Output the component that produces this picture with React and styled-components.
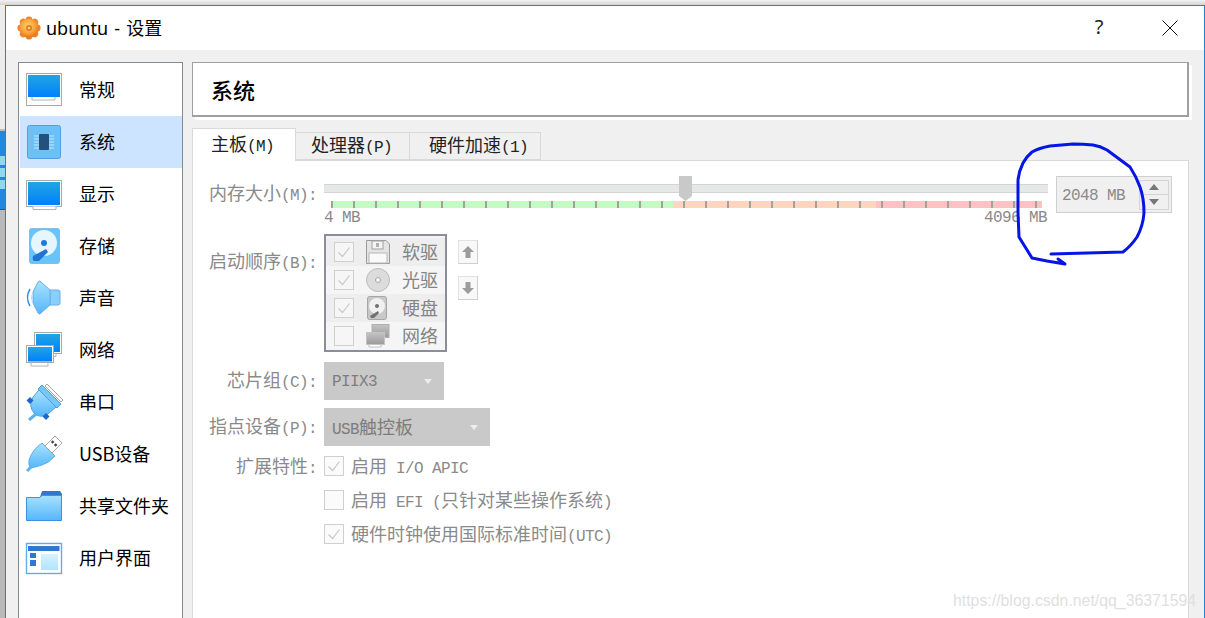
import styled, { createGlobalStyle } from 'styled-components'

const cjk = '"Noto Sans CJK SC", sans-serif'
const mono = '"Liberation Mono", "Noto Sans CJK SC", monospace'

const GlobalStyle = createGlobalStyle`
  html, body {
    margin: 0;
    padding: 0;
    background: #e6e6e6;
    font-family: ${cjk};
  }
`

const Page = styled.div`
  position: relative;
  display: flex;
  flex-direction: column;
  width: 1205px;
  height: 618px;
  overflow: hidden;
`

const TopStrip = styled.div`
  height: 5px;
  flex: none;
  background: linear-gradient(#f2f2f2, #d4d4d4);
`

const Desk = styled.div`
  display: flex;
  flex: 1;
  min-height: 0;
`

const Backdrop = styled.div`
  display: flex;
  flex-direction: column;
  width: 5px;
  flex: none;
  background: #b9b9b9;
`

const BackdropLight = styled.div`
  height: 124px;
  background: #ececec;
  border-bottom: 2px solid #bcbcbc;
`

const BackdropTask = styled.div`
  display: flex;
  flex-direction: column;
  gap: 3px;
  height: 79px;
  padding-top: 25px;
  box-sizing: border-box;
  background: #2088e0;
  border-bottom: 1px solid #0d5fa8;
`

const TaskChip = styled.div`
  height: 9px;
  background: #90d8ea;
`

const Window = styled.div`
  display: flex;
  flex-direction: column;
  flex: 1;
  min-width: 0;
  background: #f0f0f0;
  border: 1px solid #1f83d4;
  border-bottom: 0;
`

const TitleBar = styled.div`
  display: flex;
  align-items: center;
  height: 44px;
  flex: none;
  padding-left: 11px;
  background: #fff;
`

const TitleText = styled.span`
  margin-left: 5px;
  font: 18px/24px "Noto Sans", ${cjk};
  word-spacing: 1.5px;
  color: #000;
`

const TitleButtons = styled.div`
  display: flex;
  align-items: center;
  margin-left: auto;
`

const HelpMark = styled.span`
  width: 14px;
  margin: -3px 56px 0 0;
  text-align: center;
  font: 20px/24px "Noto Sans", sans-serif;
  color: #222;
`

const CloseMark = styled.svg`
  width: 16px;
  height: 16px;
  margin-right: 26px;
`

const Body = styled.div`
  display: flex;
  flex: 1;
  min-height: 0;
  gap: 9px;
  padding: 12px 15px 0 12px;
`

const Sidebar = styled.ul`
  width: 162px;
  flex: none;
  margin: 0;
  padding: 1px 0 0 1px;
  list-style: none;
  background: #fff;
  border: 1px solid #828a96;
  border-bottom: 0;
`

const NavItem = styled.li`
  display: flex;
  align-items: center;
  gap: 17px;
  height: 52px;
  padding-left: 6px;
  font-size: 18px;
  line-height: 24px;
  color: #000;
  background: ${(p) => (p.$active ? '#cce4ff' : 'transparent')};
`

const NavText = styled.span`
  margin-top: -2px;
`

const NavIcon = styled.svg`
  width: 36px;
  height: 36px;
  flex: none;
  overflow: visible;
`

const Content = styled.div`
  display: flex;
  flex-direction: column;
  flex: 1;
  min-width: 0;
`

const Header = styled.div`
  display: flex;
  align-items: center;
  height: 55px;
  flex: none;
  box-sizing: border-box;
  padding-left: 18px;
  font-size: 22px;
  font-weight: 500;
  color: #000;
  background: #fff;
  border: 1px solid #a0a0a0;
  border-width: 1px 2px 2px 1px;
  box-shadow: 3px 3px 0 #fff;
`

const TabRow = styled.div`
  display: flex;
  align-items: flex-end;
  height: 32px;
  flex: none;
  margin-top: 11px;
`

const Tab = styled.div`
  position: relative;
  z-index: ${(p) => (p.$active ? 1 : 0)};
  box-sizing: border-box;
  height: ${(p) => (p.$active ? '33px' : '28px')};
  margin-bottom: ${(p) => (p.$active ? '-1px' : '0')};
  margin-left: ${(p) => (p.$active ? '0' : '-1px')};
  padding: ${(p) => (p.$active ? '3px' : '0')} ${(p) => p.$right}px 0 ${(p) => p.$left}px;
  line-height: 22px;
  color: #222;
  background: ${(p) => (p.$active ? '#fff' : '#f0f0f0')};
  border: 1px solid #d9d9d9;
  border-bottom: ${(p) => (p.$active ? '0' : '1px solid #d9d9d9')};
`

const CjkText = styled.span`
  font-family: ${cjk};
  font-size: 18px;
`

const Latin = styled.span`
  font-family: ${mono};
  font-size: 16px;
  letter-spacing: -0.6px;
  white-space: pre;
`

const ValueText = styled(Latin)`
  margin-top: 2px;
`

const Panel = styled.div`
  flex: 1;
  min-height: 0;
  padding-top: 15px;
  background: #fff;
  border: 1px solid #d9d9d9;
  border-bottom: 0;
  color: #8a8a8a;
`

const Row = styled.div`
  display: grid;
  grid-template-columns: 124px 1fr;
  column-gap: 7px;
  margin-top: ${(p) => p.$top || 0}px;
`

const Label = styled.div`
  margin-top: ${(p) => p.$top || 0}px;
  text-align: right;
  line-height: 20px;
  white-space: nowrap;
  color: #8a8a8a;
`

const Control = styled.div`
  display: flex;
  align-items: flex-start;
`

const SliderBlock = styled.div`
  position: relative;
  width: 724px;
  height: 50px;
  flex: none;
  padding-top: 8px;
  box-sizing: border-box;
`

const Groove = styled.div`
  height: 9px;
  box-sizing: border-box;
  background: #e6e8e8;
  border-top: 1px solid #d4d4d4;
  border-bottom: 1px solid #d4d4d4;
`

const Handle = styled.div`
  position: absolute;
  left: 355px;
  top: 0;
  width: 13px;
  height: 25px;
  background: #c9c9c9;
  clip-path: polygon(0 0, 100% 0, 100% 80%, 50% 100%, 0 80%);
`

const Scale = styled.div`
  width: 711px;
  height: 7px;
  margin: 8px 0 0 7px;
  background:
    repeating-linear-gradient(90deg, #a3a295 0 2px, transparent 2px 22px),
    linear-gradient(
      90deg,
      #c4fbc4 0 342px,
      #ffd5c0 342px 545px,
      #ffc1c1 545px
    );
`

const ScaleLabels = styled.div`
  display: flex;
  justify-content: space-between;
  height: 16px;
  margin-top: 2px;
  padding-right: 1px;
  align-items: center;
  color: #8a8a8a;
`

const Spin = styled.div`
  display: flex;
  align-items: center;
  justify-content: space-between;
  width: 116px;
  height: 37px;
  flex: none;
  box-sizing: border-box;
  margin: 0 0 0 8px;
  padding: 0 2px 0 5px;
  background: #f0f0f0;
  border: 1px solid #cfcfcf;
  color: #8a8a8a;
`

const SpinButtons = styled.div`
  display: flex;
  flex-direction: column;
  width: 30px;
  height: 30px;
  box-sizing: border-box;
  border: 1px solid #d4d4d4;
`

const SpinStep = styled.div`
  display: flex;
  flex: 1;
  align-items: center;
  justify-content: center;
  & + & {
    border-top: 1px solid #d4d4d4;
  }
`

const StepArrow = styled.svg`
  width: 10px;
  height: 6px;
`

const BootList = styled.div`
  width: 123px;
  height: 118px;
  box-sizing: border-box;
  padding-top: 2px;
  background: #f3f3f3;
  border: 2px solid #8b8e99;
`

const BootRow = styled.div`
  display: flex;
  align-items: center;
  height: 28px;
  padding-left: 8px;
  background: ${(p) => (p.$odd ? '#eeeeee' : '#f5f5f5')};
  color: #848484;
`

const RaisedText = styled.span`
  margin-top: -2px;
`

const Check = styled.span`
  display: inline-flex;
  align-items: center;
  justify-content: center;
  width: 20px;
  height: 20px;
  flex: none;
  box-sizing: border-box;
  background: ${(p) => (p.$list ? '#f6f6f6' : '#fbfbfb')};
  border: 1px solid #cfcfcf;
`

const CheckMark = styled.svg`
  width: 14px;
  height: 12px;
`

const BootIcon = styled.svg`
  width: 24px;
  height: 24px;
  flex: none;
  margin: 0 12px;
`

const MoveButtons = styled.div`
  display: flex;
  flex-direction: column;
  gap: 12px;
  margin: 6px 0 0 11px;
`

const MoveButton = styled.div`
  display: flex;
  align-items: center;
  justify-content: center;
  width: 20px;
  height: 24px;
  box-sizing: border-box;
  background: #f8f8f8;
  border: 1px solid #e2e2e2;
  border-right-color: #cfcfcf;
  border-bottom-color: #cfcfcf;
`

const MoveArrow = styled.svg`
  width: 12px;
  height: 12px;
`

const Select = styled.div`
  display: flex;
  align-items: center;
  justify-content: space-between;
  width: ${(p) => p.$width}px;
  height: 38px;
  box-sizing: border-box;
  padding: 0 12px 0 8px;
  background: #c9c9c9;
  color: #7d7d7d;
`

const SelectArrow = styled.svg`
  width: 8px;
  height: 5px;
`

const OptionRow = styled.div`
  display: flex;
  align-items: center;
  gap: 7px;
  height: 20px;
  margin-top: ${(p) => p.$top || 0}px;
  color: #8a8a8a;
  white-space: nowrap;
`

const Stack = styled.div`
  display: flex;
  flex-direction: column;
`

const Scribble = styled.svg`
  position: absolute;
  left: 1010px;
  top: 138px;
  width: 145px;
  height: 135px;
`

const Watermark = styled.div`
  position: absolute;
  left: 953px;
  top: 591px;
  font: 15.85px/20px "Liberation Sans", sans-serif;
  color: #dfdfdf;
  white-space: nowrap;
`

const HiddenDefs = styled.svg`
  position: absolute;
  width: 0;
  height: 0;
`

// shared gradients for the coloured page icons
const Gradients = () => (
  <HiddenDefs aria-hidden="true">
    <defs>
      <linearGradient id="screen" x1="0" y1="0" x2="0" y2="1">
        <stop offset="0" stopColor="#22a5e4" />
        <stop offset="1" stopColor="#0080fb" />
      </linearGradient>
      <linearGradient id="sky" x1="0" y1="0" x2="0" y2="1">
        <stop offset="0" stopColor="#a8e2ff" />
        <stop offset="1" stopColor="#55b6fa" />
      </linearGradient>
      <linearGradient id="pale" x1="0" y1="0" x2="0" y2="1">
        <stop offset="0" stopColor="#d6f2ff" />
        <stop offset="1" stopColor="#b0e5ff" />
      </linearGradient>
      <radialGradient id="gear" cx="0.45" cy="0.4" r="0.6">
        <stop offset="0" stopColor="#ffd078" />
        <stop offset="0.6" stopColor="#fba53c" />
        <stop offset="1" stopColor="#e8701c" />
      </radialGradient>
      <linearGradient id="grey" x1="0" y1="0" x2="0" y2="1">
        <stop offset="0" stopColor="#c4c4c4" />
        <stop offset="1" stopColor="#9a9a9a" />
      </linearGradient>
    </defs>
  </HiddenDefs>
)

const GearIcon = () => {
  const teeth = [0, 45, 90, 135, 180, 225, 270, 315]
  return (
    <svg width="24" height="24" viewBox="0 0 24 24">
      {teeth.map((a) => (
        <circle key={a} cx="12" cy="3.8" r="3.4" fill="#ee8424" transform={`rotate(${a} 12 12)`} />
      ))}
      <circle cx="12" cy="12" r="9.6" fill="url(#gear)" />
      <circle cx="12" cy="12" r="3" fill="#e07a20" />
      <circle cx="12" cy="12" r="1.3" fill="#ffcf7a" />
    </svg>
  )
}

const GeneralIcon = () => (
  <NavIcon viewBox="0 0 36 36">
    <rect x="0.5" y="1.5" width="35" height="32" fill="#fff" stroke="#a8a8a8" />
    <rect x="2" y="3" width="32" height="22" fill="url(#screen)" />
    <path d="M6 25v3h23v-3" fill="#fff" stroke="#b4b4b4" />
  </NavIcon>
)

const SystemIcon = () => (
  <NavIcon viewBox="0 0 36 36">
    <rect x="1.5" y="1.5" width="33" height="33" rx="2" fill="#6cc0f6" stroke="#4f9fe2" />
    <path d="M8 12h20M8 15h20M8 18h20M8 21h20M8 24h20" stroke="#a5dcfb" strokeWidth="1.5" />
    <rect x="13" y="10" width="10" height="16" rx="1" fill="#24507e" />
  </NavIcon>
)

const DisplayIcon = () => (
  <NavIcon viewBox="0 0 36 36">
    <rect x="0.5" y="4.5" width="35" height="26" fill="#fff" stroke="#a8a8a8" />
    <rect x="2" y="6" width="32" height="23" fill="url(#screen)" />
    <path d="M7 30.500v3h23v-3" fill="#fff" stroke="#b4b4b4" />
  </NavIcon>
)

const StorageIcon = () => (
  <NavIcon viewBox="0 0 36 36">
    <rect x="3.5" y="0.5" width="30" height="35" rx="2" fill="#66c4fb" stroke="#8cb8e2" />
    <circle cx="18" cy="15" r="13" fill="#e6f6ff" />
    <circle cx="18" cy="15" r="3" fill="#1f7ada" />
    <path d="M7 28l13-7 2 3-9 9H8.500Q6 33 7 28z" fill="#2273d6" />
  </NavIcon>
)

const AudioIcon = () => (
  <NavIcon viewBox="0 0 36 36">
    <path d="M24 10H32Q34 10 34 12V23Q34 25 32 25H24Z" fill="#88d0fc" stroke="#6aaeea" />
    <path
      d="M7 12L12 2Q13.500 0 15 2L24 10V25L15 33Q13.500 35 12 33L7 23Z"
      fill="url(#sky)"
      stroke="#6aaeea"
    />
    <path d="M4 9Q-1 17.500 4 26" fill="none" stroke="#3c8ee2" strokeWidth="1.500" />
    <path d="M6.500 14Q5 17.500 6.500 21" fill="none" stroke="#b9dffa" strokeWidth="1.500" />
  </NavIcon>
)

const NetworkIcon = () => (
  <NavIcon viewBox="0 0 36 36">
    <path d="M30 21.500v3H23v-3" fill="#fff" stroke="#b4b4b4" />
    <rect x="8.500" y="0.500" width="27" height="21" fill="#fff" stroke="#a8a8a8" />
    <rect x="10" y="2" width="24" height="18" fill="url(#screen)" />
    <path d="M5 30.500v3.500H22v-3.500" fill="#fff" stroke="#b4b4b4" />
    <rect x="0.500" y="13.500" width="27" height="17" fill="#fff" stroke="#a8a8a8" />
    <rect x="2" y="15" width="24" height="14.500" fill="url(#screen)" />
  </NavIcon>
)

const SerialIcon = () => (
  <NavIcon viewBox="0 0 36 36">
    <path d="M19 2L21 0 37 16 35 18Z" fill="#fff" stroke="#a8a8a8" />
    <path d="M10 30L3 36" stroke="#5eb0f0" strokeWidth="3" />
    <path d="M13 6L30 23 22 30Q14 35 8 29Q2 22 7 13Z" fill="url(#sky)" stroke="#4f9fe2" />
    <path d="M12 5L16 1 35 20 31 24Z" fill="#74c6fb" stroke="#4f9fe2" />
    <path d="M4 13L7.500 16.500 4 20 .5 16.500Z" fill="#1c68cc" />
    <path d="M20 29L23.500 32.500 20 36 16.500 32.500Z" fill="#1c68cc" />
  </NavIcon>
)

const UsbIcon = () => (
  <NavIcon viewBox="0 0 36 36">
    <path d="M19 10L29 0 36 7 26 17Z" fill="#fff" stroke="#a8a8a8" />
    <rect x="25.500" y="5" width="2.500" height="2.500" fill="#444" transform="rotate(45 27 6)" />
    <rect x="28.500" y="8" width="2.500" height="2.500" fill="#444" transform="rotate(45 30 9)" />
    <path
      d="M16 7L29 20Q23 27 16 29Q10 31 5 32Q2 30 3 24Q6 14 16 7Z"
      fill="url(#sky)"
      stroke="#5eb0f0"
    />
    <path d="M5 31L1 35" stroke="#5eb0f0" strokeWidth="3" />
  </NavIcon>
)

const FolderIcon = () => (
  <NavIcon viewBox="0 0 36 36">
    <path d="M14 9L16 3H34L36 6V10Z" fill="#2f78d0" />
    <path d="M0.500 9.500H14L16 7.500H35.500V32.500H0.500Z" fill="url(#sky)" stroke="#3f90e2" />
  </NavIcon>
)

const WindowIcon = () => (
  <NavIcon viewBox="0 0 36 36">
    <rect x="0.500" y="3.500" width="35" height="30" fill="#fff" stroke="#60adee" strokeWidth="1.400" />
    <rect x="2" y="6" width="31.500" height="5" fill="#2f78d0" />
    <rect x="4" y="13" width="6" height="5" fill="#2f78d0" />
    <rect x="4" y="20" width="6" height="6" fill="#2f78d0" />
    <rect x="15" y="14" width="17" height="16" fill="url(#pale)" />
  </NavIcon>
)

const FloppyIcon = () => (
  <BootIcon viewBox="0 0 24 24">
    <path d="M.5.500H20L23.500 4V23.500H.5Z" fill="#e4e4e4" stroke="#9a9a9a" />
    <rect x="6" y="1" width="11" height="8" fill="#f4f4f4" stroke="#a0a0a0" />
    <rect x="10" y="3" width="3" height="4" fill="#b0b0b0" />
    <rect x="3" y="13" width="18" height="10" fill="#fafafa" stroke="#b6b6b6" />
  </BootIcon>
)

const DiscIcon = () => (
  <BootIcon viewBox="0 0 24 24">
    <circle cx="12" cy="12" r="11.500" fill="#dcdcdc" stroke="#bcbcbc" />
    <circle cx="12" cy="12" r="2.500" fill="#f4f4f4" stroke="#a8a8a8" />
  </BootIcon>
)

const DiskIcon = () => (
  <BootIcon viewBox="0 0 24 24">
    <rect x="1.500" y="0.500" width="19" height="23" rx="2" fill="#c8c8c8" stroke="#a6a6a6" />
    <circle cx="11" cy="10" r="8" fill="#f0f0f0" />
    <circle cx="11" cy="10" r="2" fill="#707070" />
    <path d="M4 20l8-5 1 2-5 5H5Z" fill="#707070" />
  </BootIcon>
)

const NetIcon = () => (
  <BootIcon viewBox="0 0 24 24">
    <rect x="6" y="0.500" width="17" height="13" fill="url(#grey)" stroke="#b0b0b0" />
    <path d="M3 20v3h12v-3" fill="#fff" stroke="#c0c0c0" />
    <rect x="0.500" y="8.500" width="18" height="12" fill="url(#grey)" stroke="#c4c4c4" />
  </BootIcon>
)

const Tick = () => (
  <CheckMark viewBox="0 0 14 12">
    <path d="M1.500 6.500L5.500 10.500 12.500 1.500" fill="none" stroke="#c8c8c8" strokeWidth="1.200" />
  </CheckMark>
)

const navItems = [
  { icon: <GeneralIcon />, text: '常规' },
  { icon: <SystemIcon />, text: '系统', active: true },
  { icon: <DisplayIcon />, text: '显示' },
  { icon: <StorageIcon />, text: '存储' },
  { icon: <AudioIcon />, text: '声音' },
  { icon: <NetworkIcon />, text: '网络' },
  { icon: <SerialIcon />, text: '串口' },
  { icon: <UsbIcon />, text: 'USB设备' },
  { icon: <FolderIcon />, text: '共享文件夹' },
  { icon: <WindowIcon />, text: '用户界面' }
]

const bootItems = [
  { icon: <FloppyIcon />, text: '软驱', on: true },
  { icon: <DiscIcon />, text: '光驱', on: true },
  { icon: <DiskIcon />, text: '硬盘', on: true },
  { icon: <NetIcon />, text: '网络', on: false }
]

export default function App() {
  return (
    <>
      <GlobalStyle />
      <Gradients />
      <Page>
        <TopStrip />
        <Desk>
          <Backdrop>
            <BackdropLight />
            <BackdropTask>
              <TaskChip />
              <TaskChip />
              <TaskChip />
            </BackdropTask>
          </Backdrop>
          <Window>
            <TitleBar>
              <GearIcon />
              <TitleText>ubuntu - 设置</TitleText>
              <TitleButtons>
                <HelpMark>?</HelpMark>
                <CloseMark viewBox="0 0 16 16">
                  <path d="M.5.500L15.500 15.500M15.500.500L.5 15.500" stroke="#111" fill="none" />
                </CloseMark>
              </TitleButtons>
            </TitleBar>
            <Body>
              <Sidebar>
                {navItems.map((item) => (
                  <NavItem key={item.text} $active={item.active}>
                    {item.icon}
                    <NavText>{item.text}</NavText>
                  </NavItem>
                ))}
              </Sidebar>
              <Content>
                <Header>系统</Header>
                <TabRow>
                  <Tab $active $left={18} $right={21}>
                    <CjkText>主板</CjkText>
                    <Latin>(M)</Latin>
                  </Tab>
                  <Tab $left={15} $right={17}>
                    <CjkText>处理器</CjkText>
                    <Latin>(P)</Latin>
                  </Tab>
                  <Tab $left={19} $right={12}>
                    <CjkText>硬件加速</CjkText>
                    <Latin>(1)</Latin>
                  </Tab>
                </TabRow>
                <Panel>
                  <Row>
                    <Label $top={6}>
                      <CjkText>内存大小</CjkText>
                      <Latin>(M):</Latin>
                    </Label>
                    <Control>
                      <SliderBlock>
                        <Groove />
                        <Handle />
                        <Scale />
                        <ScaleLabels>
                          <Latin>4 MB</Latin>
                          <Latin>4096 MB</Latin>
                        </ScaleLabels>
                      </SliderBlock>
                      <Spin>
                        <ValueText>2048 MB</ValueText>
                        <SpinButtons>
                          <SpinStep>
                            <StepArrow viewBox="0 0 10 6">
                              <path d="M5 0l5 6H0z" fill="#777" />
                            </StepArrow>
                          </SpinStep>
                          <SpinStep>
                            <StepArrow viewBox="0 0 10 6">
                              <path d="M0 0h10L5 6z" fill="#777" />
                            </StepArrow>
                          </SpinStep>
                        </SpinButtons>
                      </Spin>
                    </Control>
                  </Row>
                  <Row $top={8}>
                    <Label $top={16}>
                      <CjkText>启动顺序</CjkText>
                      <Latin>(B):</Latin>
                    </Label>
                    <Control>
                      <BootList>
                        {bootItems.map((item, i) => (
                          <BootRow key={item.text} $odd={i % 2 === 0}>
                            <Check $list>{item.on && <Tick />}</Check>
                            {item.icon}
                            <RaisedText>
                              <CjkText>{item.text}</CjkText>
                            </RaisedText>
                          </BootRow>
                        ))}
                      </BootList>
                      <MoveButtons>
                        <MoveButton>
                          <MoveArrow viewBox="0 0 12 12">
                            <path d="M6 0l6 6H8.500v6h-5V6H0z" fill="#9c9c9c" />
                          </MoveArrow>
                        </MoveButton>
                        <MoveButton>
                          <MoveArrow viewBox="0 0 12 12">
                            <path d="M6 12L0 6h3.500V0h5v6H12z" fill="#9c9c9c" />
                          </MoveArrow>
                        </MoveButton>
                      </MoveButtons>
                    </Control>
                  </Row>
                  <Row $top={10}>
                    <Label $top={7}>
                      <CjkText>芯片组</CjkText>
                      <Latin>(C):</Latin>
                    </Label>
                    <Control>
                      <Select $width={120}>
                        <ValueText>PIIX3</ValueText>
                        <SelectArrow viewBox="0 0 8 5">
                          <path d="M0 0h8L4 5z" fill="#ededed" />
                        </SelectArrow>
                      </Select>
                    </Control>
                  </Row>
                  <Row $top={8}>
                    <Label $top={7}>
                      <CjkText>指点设备</CjkText>
                      <Latin>(P):</Latin>
                    </Label>
                    <Control>
                      <Select $width={166}>
                        <RaisedText>
                          <Latin>USB</Latin>
                          <CjkText>触控板</CjkText>
                        </RaisedText>
                        <SelectArrow viewBox="0 0 8 5">
                          <path d="M0 0h8L4 5z" fill="#ededed" />
                        </SelectArrow>
                      </Select>
                    </Control>
                  </Row>
                  <Row $top={10}>
                    <Label $top={-1}>
                      <CjkText>扩展特性</CjkText>
                      <Latin>:</Latin>
                    </Label>
                    <Stack>
                      <OptionRow>
                        <Check>
                          <Tick />
                        </Check>
                        <RaisedText>
                          <CjkText>启用</CjkText>
                          <Latin> I/O APIC</Latin>
                        </RaisedText>
                      </OptionRow>
                      <OptionRow $top={14}>
                        <Check />
                        <RaisedText>
                          <CjkText>启用</CjkText>
                          <Latin> EFI (</Latin>
                          <CjkText>只针对某些操作系统</CjkText>
                          <Latin>)</Latin>
                        </RaisedText>
                      </OptionRow>
                      <OptionRow $top={14}>
                        <Check>
                          <Tick />
                        </Check>
                        <RaisedText>
                          <CjkText>硬件时钟使用国际标准时间</CjkText>
                          <Latin>(UTC)</Latin>
                        </RaisedText>
                      </OptionRow>
                    </Stack>
                  </Row>
                </Panel>
              </Content>
            </Body>
          </Window>
        </Desk>
        <Scribble viewBox="1010 138 145 135">
          <path
            d="M1051 254L1123 252Q1131 246 1137 237Q1143 226 1144 213Q1144 198 1140 187Q1136 176 1130 167L1107 150Q1100 146 1093 145Q1083 144 1073 144L1050 146Q1039 148 1032 152Q1026 157 1023 163Q1019 171 1018 180L1018 213L1019 237L1032 258L1047 261L1065 264L1058 259"
            fill="none"
            stroke="#0515e6"
            strokeWidth="3"
            strokeLinecap="round"
            strokeLinejoin="round"
          />
        </Scribble>
        <Watermark>https://blog.csdn.net/qq_36371594</Watermark>
      </Page>
    </>
  )
}
